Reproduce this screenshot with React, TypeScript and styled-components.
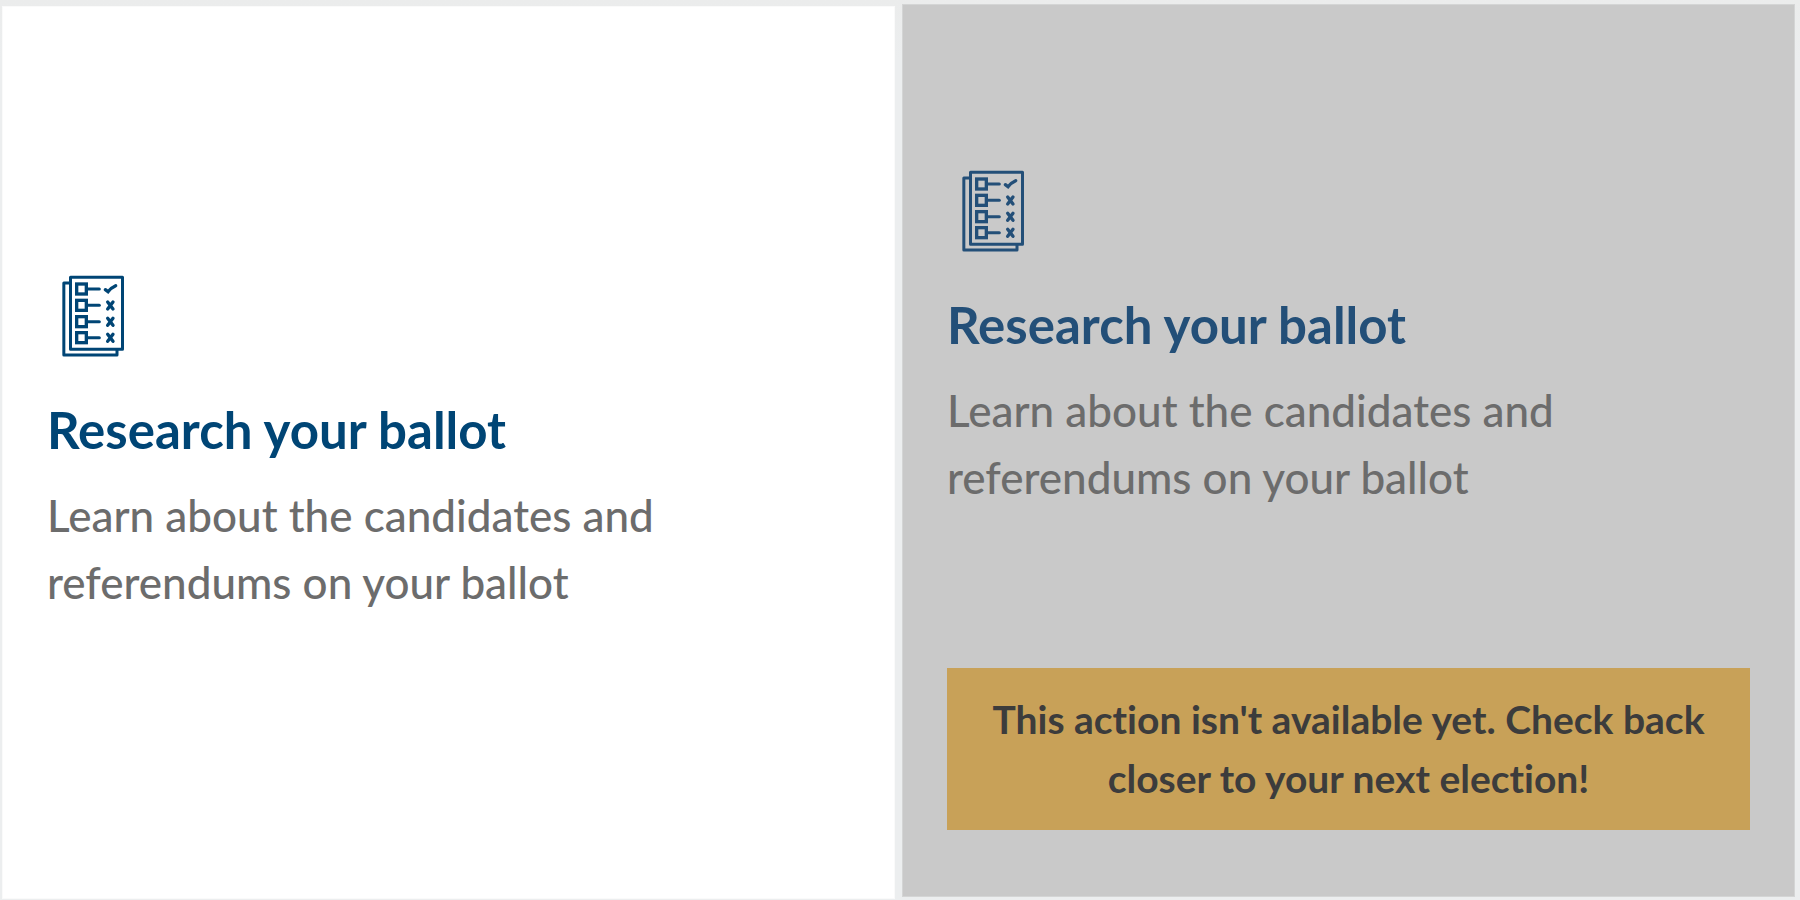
import React from "react";
import styled, { createGlobalStyle } from "styled-components";

const GlobalStyle = createGlobalStyle`
  *, *::before, *::after { box-sizing: border-box; }
  body {
    margin: 0;
    background: #eceded;
    font-family: Lato, "Liberation Sans", sans-serif;
    font-variant-ligatures: none;
  }
`;

const Page = styled.main`
  display: grid;
  grid-template-columns: repeat(2, minmax(0, 1fr));
  gap: 7px;
  min-height: 100vh;
  padding: 4px 5px 1px 2px;
  background: linear-gradient(#ebecec, #eceeef 60px);
`;

const Card = styled.article<{ $disabled?: boolean }>`
  display: flex;
  flex-direction: column;
  margin: ${(p) => (p.$disabled ? "0 0 2px" : "2px 0 0")};
  padding: ${(p) => (p.$disabled ? "4px 45px 67px" : "2px 45px 22px")};
  background: ${(p) => (p.$disabled ? "#c9c9c9" : "#ffffff")};
  box-shadow: inset 0 0 0 1px ${(p) => (p.$disabled ? "#d4d5d5" : "#fafafa")};
`;

const Content = styled.div`
  flex: 1;
  display: flex;
  flex-direction: column;
  justify-content: center;
`;

const Icon = styled.svg<{ $disabled?: boolean }>`
  width: 92px;
  height: 92px;
  margin-bottom: 34px;
  fill: none;
  stroke: ${(p) => (p.$disabled ? "#234f78" : "#004575")};
`;

const Title = styled.h2<{ $disabled?: boolean }>`
  margin: 0 0 19px;
  font-size: 51px;
  line-height: 67px;
  font-weight: 700;
  color: ${(p) => (p.$disabled ? "#234f78" : "#004575")};
`;

const Description = styled.p`
  max-width: 640px;
  margin: 0;
  font-size: 44px;
  line-height: 67px;
  font-weight: 500;
  color: #6c6c6c;
`;

const Notice = styled.p`
  margin: 0;
  padding: 22px 32px;
  background: #c8a158;
  color: #3c3c3c;
  font-size: 39px;
  line-height: 59px;
  font-weight: 700;
  text-align: center;
`;

const ROWS = [71, 120, 169, 217];

function BallotIcon({ disabled }: { disabled?: boolean }) {
  return (
    <Icon $disabled={disabled} viewBox="-7 14 276 276" strokeWidth="9" aria-hidden="true">
      <rect x="63.5" y="36" width="156" height="216" strokeLinejoin="round" />
      <path d="M61 53H43.5V269H203V253" strokeLinejoin="round" />
      {ROWS.map((y, i) => (
        <g key={y}>
          <rect x="82" y={y - 15} width="29" height="30" strokeWidth="10" />
          <path d={`M113 ${y}H150`} strokeLinecap="round" />
          {i === 0 ? (
            <path d="M168 73L176 79C182 71 190 65 199 61" strokeWidth="10" strokeLinecap="round" />
          ) : (
            <path
              d={`M175 ${y - 10}L191 ${y + 11}M191 ${y - 10}L175 ${y + 11}`}
              strokeWidth="10"
              strokeLinecap="round"
            />
          )}
        </g>
      ))}
    </Icon>
  );
}

function ActionCard({ title, text, notice }: { title: string; text: string; notice?: string }) {
  const disabled = Boolean(notice);
  return (
    <Card $disabled={disabled} aria-disabled={disabled}>
      <Content>
        <BallotIcon disabled={disabled} />
        <Title $disabled={disabled}>{title}</Title>
        <Description>{text}</Description>
      </Content>
      {notice && <Notice>{notice}</Notice>}
    </Card>
  );
}

export default function App() {
  const title = "Research your ballot";
  const text = "Learn about the candidates and referendums on your ballot";
  return (
    <>
      <GlobalStyle />
      <Page>
        <ActionCard title={title} text={text} />
        <ActionCard
          title={title}
          text={text}
          notice="This action isn't available yet. Check back closer to your next election!"
        />
      </Page>
    </>
  );
}
